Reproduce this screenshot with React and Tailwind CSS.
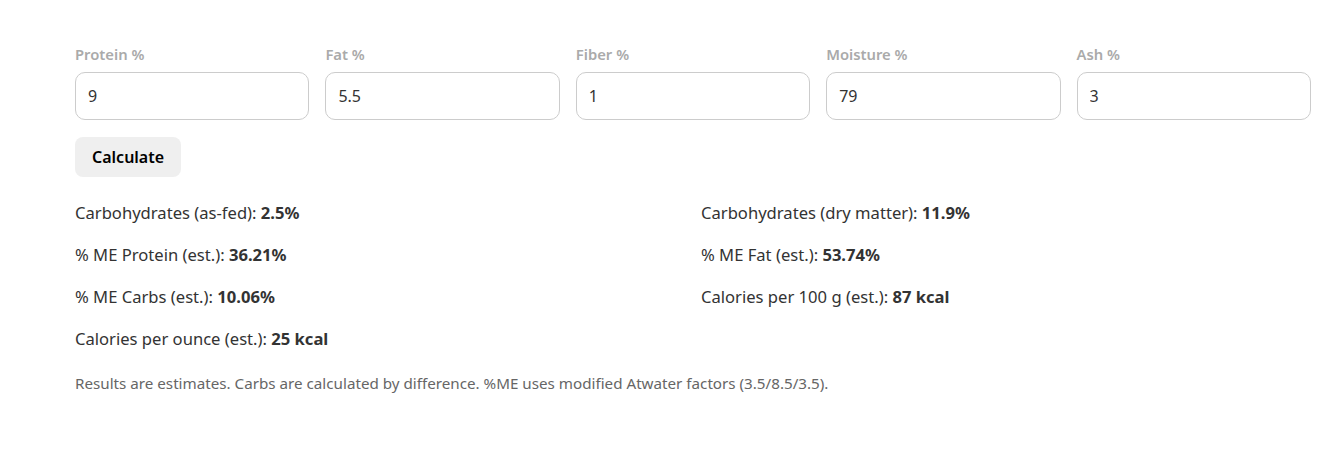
import React from "react";

const fields = [
  { label: "Protein %", value: "9" },
  { label: "Fat %", value: "5.5" },
  { label: "Fiber %", value: "1" },
  { label: "Moisture %", value: "79" },
  { label: "Ash %", value: "3" },
];

const results = [
  ["Carbohydrates (as-fed)", "2.5%"],
  ["Carbohydrates (dry matter)", "11.9%"],
  ["% ME Protein (est.)", "36.21%"],
  ["% ME Fat (est.)", "53.74%"],
  ["% ME Carbs (est.)", "10.06%"],
  ["Calories per 100 g (est.)", "87 kcal"],
  ["Calories per ounce (est.)", "25 kcal"],
];

export default function App() {
  return (
    <div
      className="min-h-[462px] bg-white px-[75px] pt-[44px] text-[#333]"
      style={{ fontFamily: '"Noto Sans", "Open Sans", sans-serif' }}
    >
      <div className="w-[1236px]">
        <div className="grid grid-cols-5 gap-4">
          {fields.map((f) => (
            <label key={f.label} className="flex flex-col">
              <span className="mb-2 text-[14.8px] leading-5 font-semibold text-[#aaa]">{f.label}</span>
              <input
                defaultValue={f.value}
                className="h-12 rounded-[10px] border border-[#ccc] bg-white px-3 text-[16px] text-[#333] outline-none"
              />
            </label>
          ))}
        </div>
        <button className="mt-[17px] h-10 rounded-lg bg-[#efefef] px-[17px] text-[16px] font-semibold text-black">
          Calculate
        </button>
        <div className="mt-6 grid grid-cols-2 gap-x-4 gap-y-[18px]">
          {results.map(([k, v]) => (
            <div key={k} className="text-[16.6px] leading-6">
              {k}: <strong className="font-bold">{v}</strong>
            </div>
          ))}
        </div>
        <p className="mt-[22px] text-[15.2px] leading-5 text-[#666]">
          Results are estimates. Carbs are calculated by difference. %ME uses modified Atwater factors (3.5/8.5/3.5).
        </p>
      </div>
    </div>
  );
}
